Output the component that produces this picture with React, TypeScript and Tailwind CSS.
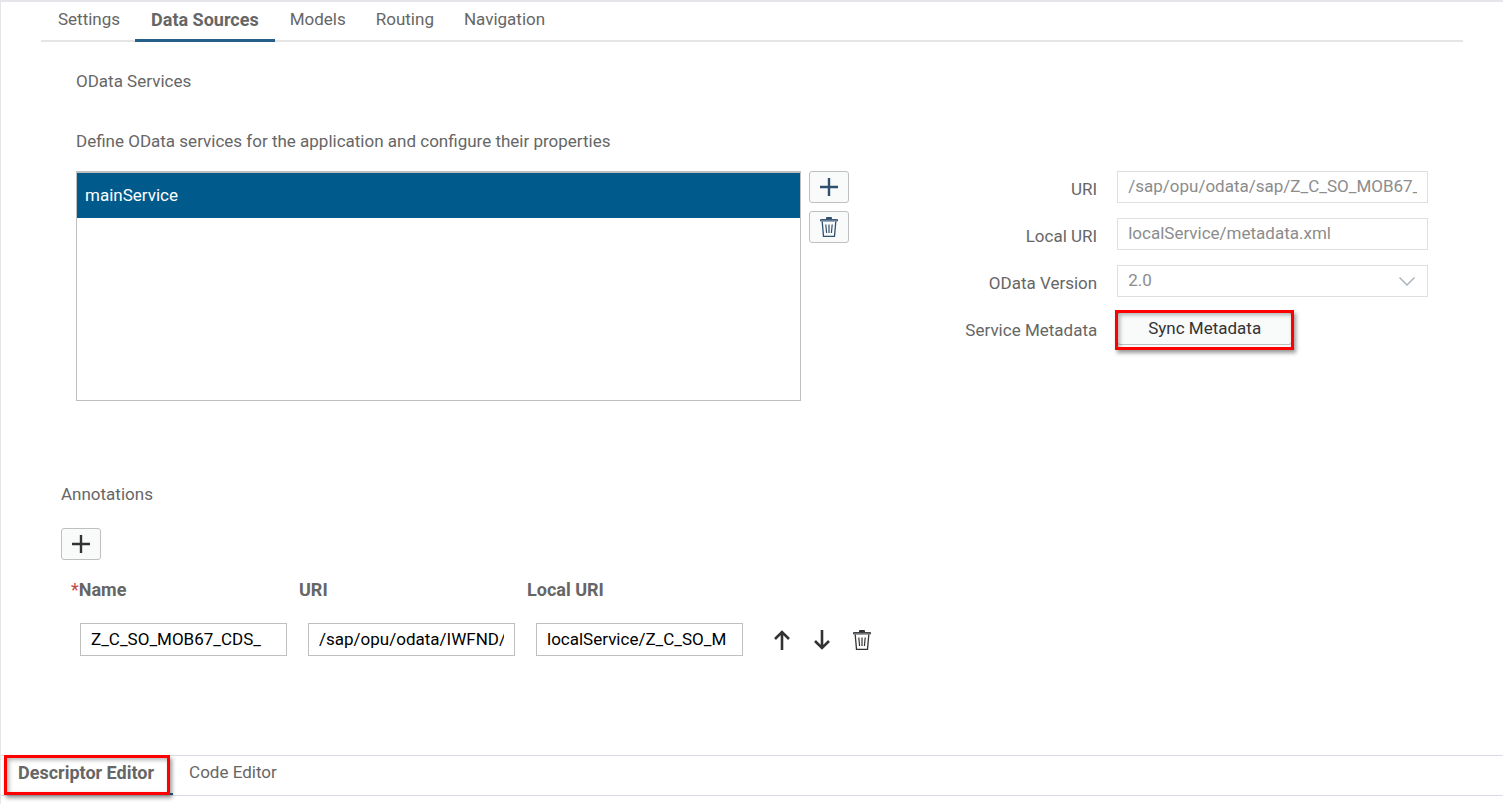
import { useState } from 'react';
import type { ReactNode } from 'react';

const tabs = ['Settings', 'Data Sources', 'Models', 'Routing', 'Navigation'];

const annotation = [
  { label: 'Name', value: 'Z_C_SO_MOB67_CDS_', required: true },
  { label: 'URI', value: '/sap/opu/odata/IWFND/C', required: false },
  { label: 'Local URI', value: 'localService/Z_C_SO_M', required: false },
];

function PlusIcon() {
  return (
    <svg viewBox="0 0 18 18" className="h-[18px] w-[18px]" fill="none" stroke="currentColor" strokeWidth="2.4">
      <path d="M9 0v18M0 9h18" />
    </svg>
  );
}

function TrashIcon() {
  return (
    <svg viewBox="0 0 18 20" className="h-5 w-[18px]" fill="none" stroke="currentColor">
      <path d="M6 2V1.2C6 .5 6.500 0 7.200 0h3.600c.7 0 1.200.5 1.200 1.200V2z" fill="currentColor" stroke="none" />
      <path d="M.5 2.500h17v1.500H.5z" strokeWidth=".9" fill="#9aa7b3" />
      <path d="M2.200 4.500l1.300 14.800h11L15.800 4.500" strokeWidth="1.300" />
      <path d="M5.800 7.500l.8 8.500M9 7.500V16M12.200 7.500l-.8 8.500" strokeWidth="1.200" />
    </svg>
  );
}

function ArrowIcon({ down = false }: { down?: boolean }) {
  return (
    <svg
      viewBox="0 0 16 20"
      className={down ? 'h-5 w-4 rotate-180' : 'h-5 w-4'}
      fill="none"
      stroke="currentColor"
      strokeWidth="2.6"
    >
      <path d="M8 20V1.800M1 9l7-7 7 7" />
    </svg>
  );
}

function BoxButton({ label, children }: { label: string; children: ReactNode }) {
  return (
    <button
      aria-label={label}
      className="flex h-8 w-10 items-center justify-center rounded-[3px] border border-[#bfbfbf] bg-[#f9fafa]"
    >
      {children}
    </button>
  );
}

function Highlight({ className }: { className: string }) {
  return (
    <span
      className={`pointer-events-none absolute border-[3px] border-[#fe0000] shadow-[2px_3px_4px_rgba(0,0,0,0.4),inset_2px_2px_4px_rgba(0,0,0,0.3)] ${className}`}
    />
  );
}

export default function App() {
  const [tab, setTab] = useState('Data Sources');
  const field = 'h-8 w-full border border-[#dfdfdf] bg-white px-[10px] pb-[2px] text-[#8c8c8c] outline-none';
  const fieldLabel = 'pt-[6px] text-right';

  return (
    <div className="flex min-h-screen flex-col border-t-2 border-l border-[#e6e6ea] bg-white pb-2 font-['Roboto',sans-serif] text-[17px] leading-6 text-[#666]">
      <nav className="mx-10 flex border-b-2 border-[#e5e5e5] pl-[2px]">
        {tabs.map((t) => (
          <button
            key={t}
            onClick={() => setTab(t)}
            className={
              t === tab
                ? '-mb-[2px] border-b-[3px] border-[#265f8a] px-4 pt-[6px] pb-[7px] text-[18px] leading-6 font-bold'
                : 'px-[15px] pt-[5px] pb-[9px]'
            }
          >
            {t}
          </button>
        ))}
      </nav>

      <section className="mx-[75px] pt-[27px]">
        <h2>OData Services</h2>
        <p className="mt-9">Define OData services for the application and configure their properties</p>

        <div className="mt-[18px] grid grid-cols-[4fr_3fr]">
          <div className="flex gap-2">
            <ul className="h-[230px] flex-1 border border-t-2 border-[#bfbfbf]">
              <li className="flex h-[45px] items-center bg-[#005a8c] px-2 pb-[2px] text-white">mainService</li>
            </ul>
            <div className="flex flex-col gap-2 text-[#30506f]">
              <BoxButton label="Add service">
                <PlusIcon />
              </BoxButton>
              <BoxButton label="Delete service">
                <TrashIcon />
              </BoxButton>
            </div>
          </div>

          <form className="grid grid-cols-[4fr_5fr] content-start gap-x-5 gap-y-[15px]" onSubmit={(e) => e.preventDefault()}>
            <label htmlFor="uri" className={fieldLabel}>URI</label>
            <input id="uri" className={field} readOnly value="/sap/opu/odata/sap/Z_C_SO_MOB67_" />

            <label htmlFor="local-uri" className={fieldLabel}>Local URI</label>
            <input id="local-uri" className={field} readOnly value="localService/metadata.xml" />

            <label htmlFor="version" className={fieldLabel}>OData Version</label>
            <div className="relative">
              <select id="version" className={`${field} appearance-none`}>
                <option>2.0</option>
              </select>
              <svg
                viewBox="0 0 16 9"
                className="pointer-events-none absolute top-3 right-[13px] h-[9px] w-4"
                fill="none"
                stroke="#a9b4be"
                strokeWidth="1.500"
              >
                <path d="M.5.5L8 8 15.500.5" />
              </svg>
            </div>

            <label htmlFor="sync" className={fieldLabel}>Service Metadata</label>
            <div className="relative w-[175px]">
              <button
                id="sync"
                className="h-[33px] w-full rounded-[3px] border border-[#bfbfbf] bg-[#f9fafa] pb-[2px] text-[#333]"
              >
                Sync Metadata
              </button>
              <Highlight className="-inset-x-[2px] -top-[2px] -bottom-[5px]" />
            </div>
          </form>
        </div>
      </section>

      <section className="mx-[60px] pt-[81px]">
        <h2 className="mb-[22px]">Annotations</h2>
        <div className="text-[#333]">
          <BoxButton label="Add annotation">
            <PlusIcon />
          </BoxButton>
        </div>

        <table className="mt-[18px] ml-[10px] table-fixed text-left">
          <thead>
            <tr>
              {annotation.map((a) => (
                <th key={a.label} className="w-[228px] p-0 text-[18px] leading-6 font-bold">
                  {a.required && <span className="font-normal text-[#c14646]">*</span>}
                  {a.label}
                </th>
              ))}
              <td />
            </tr>
          </thead>
          <tbody>
            <tr>
              {annotation.map((a) => (
                <td key={a.label} className="pt-[21px] pl-[9px]">
                  <input
                    aria-label={a.label}
                    defaultValue={a.value}
                    className="block h-[33px] w-[207px] border border-[#bfbfbf] px-[10px] pb-[2px] text-black outline-none"
                  />
                </td>
              ))}
              <td className="pt-[21px]">
                <div className="flex pl-[7px] text-[#333]">
                  <button aria-label="Move up" className="flex h-8 w-10 items-center justify-center">
                    <ArrowIcon />
                  </button>
                  <button aria-label="Move down" className="flex h-8 w-10 items-center justify-center">
                    <ArrowIcon down />
                  </button>
                  <button aria-label="Delete annotation" className="flex h-8 w-10 items-center justify-center">
                    <TrashIcon />
                  </button>
                </div>
              </td>
            </tr>
          </tbody>
        </table>
      </section>

      <footer className="mt-auto flex h-[41px] border-y border-[#d9dde3] pl-[3px]">
        <button className="relative border-b-2 border-[#265f8a] pr-[19px] pb-[3px] pl-[14px] text-[18px] leading-6 font-bold">
          Descriptor Editor
          <Highlight className="-top-px right-[3px] -bottom-[2px] left-0" />
        </button>
        <button className="px-4 pb-[7px]">Code Editor</button>
      </footer>
    </div>
  );
}
